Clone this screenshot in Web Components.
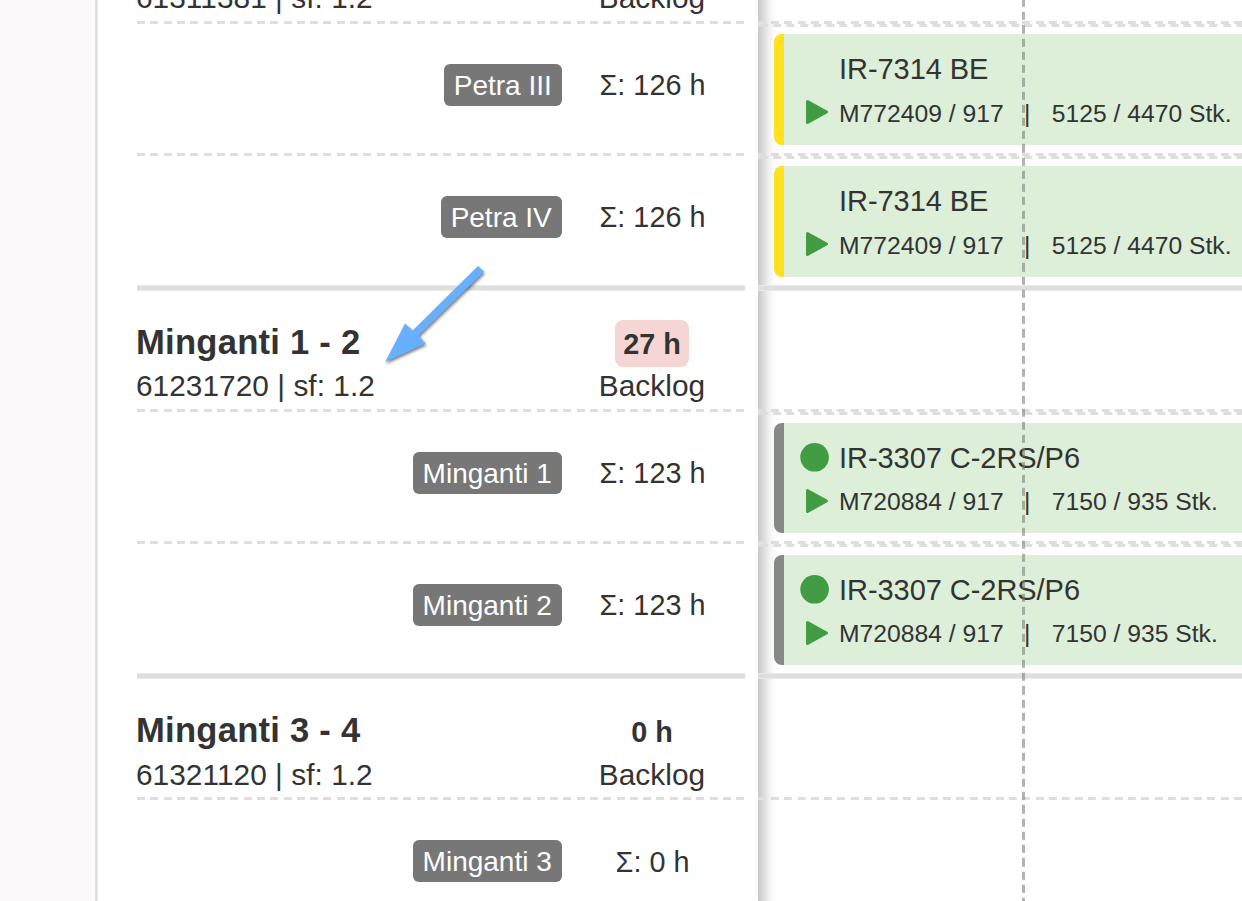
<!DOCTYPE html>
<html lang="de">
<head>
<meta charset="utf-8">
<title>Maschinenplanung</title>
<style>
html,body{margin:0;height:100%;overflow:hidden;background:#fff}
body{font-family:"Liberation Sans",Arial,sans-serif;color:#333}
</style>
</head>
<body>
<plan-board>
  <plan-group slot="labels" name="" code="61311381 | sf: 1.2" hours="" style="height:24px"></plan-group>
  <plan-machine slot="labels" name="Petra III" sum="126 h" style="height:132px"></plan-machine>
  <plan-machine slot="labels" name="Petra IV" sum="126 h" last style="height:135px"></plan-machine>
  <plan-group slot="labels" name="Minganti 1 - 2" code="61231720 | sf: 1.2" hours="27 h" alert style="height:121px"></plan-group>
  <plan-machine slot="labels" name="Minganti 1" sum="123 h" style="height:132px"></plan-machine>
  <plan-machine slot="labels" name="Minganti 2" sum="123 h" last style="height:135px"></plan-machine>
  <plan-group slot="labels" name="Minganti 3 - 4" code="61321120 | sf: 1.2" hours="0 h" style="height:121px;--sub:45px;--name-gap:1px;--hours-gap:0px"></plan-group>
  <plan-machine slot="labels" name="Minganti 3" sum="0 h" style="height:132px;--sum-line:44px"></plan-machine>

  <plan-lane slot="lanes" style="height:24px"></plan-lane>
  <plan-lane slot="lanes" double style="height:132px"><plan-job part="IR-7314 BE" order="M772409 / 917" qty="5125 / 4470 Stk." color="#ffe11f"></plan-job></plan-lane>
  <plan-lane slot="lanes" double last style="height:135px"><plan-job part="IR-7314 BE" order="M772409 / 917" qty="5125 / 4470 Stk." color="#ffe11f"></plan-job></plan-lane>
  <plan-lane slot="lanes" style="height:121px"></plan-lane>
  <plan-lane slot="lanes" double style="height:132px;--gap:8px;--job:110px;--meta:25px"><plan-job part="IR-3307 C-2RS/P6" order="M720884 / 917" qty="7150 / 935 Stk." color="#868986" dot></plan-job></plan-lane>
  <plan-lane slot="lanes" double last style="height:135px;--gap:8px;--job:110px;--meta:25px"><plan-job part="IR-3307 C-2RS/P6" order="M720884 / 917" qty="7150 / 935 Stk." color="#868986" dot></plan-job></plan-lane>
  <plan-lane slot="lanes" style="height:121px"></plan-lane>
  <plan-lane slot="lanes" style="height:132px"></plan-lane>
</plan-board>
<script>
const LINES = `
  .dash{height:3px;flex:none;background:repeating-linear-gradient(90deg,#dedede 0 8px,transparent 8px var(--p,13.32px))}
  .thick{height:6px;flex:none;background:linear-gradient(#e9e9e9 1px,#dedede 1px 5px,#e9e9e9 5px)}
`;
class Base extends HTMLElement {
  connectedCallback(){
    if(!this.shadowRoot) this.attachShadow({mode:'open'}).innerHTML = this.render();
  }
  a(n){return this.getAttribute(n)||''}
}

customElements.define('plan-board', class extends Base {
  render(){return `<style>
    :host{display:grid;grid-template-columns:95px 3px 660px 484px;height:901px;overflow:hidden;position:relative}
    .rail{background:#fbf9fa}
    .edge{background:linear-gradient(90deg,#dedede 2px,#e9e9e9 2px)}
    .labels{display:flex;flex-direction:column;padding:0 13px 0 39px;min-height:0}
    .lanes{display:flex;flex-direction:column;min-height:0;overflow:hidden;background:linear-gradient(90deg,#c9c9c9 0,#dadada 5px,#eeeeee 10px,#fafafa 15px,#fff 20px)}
    .now{position:absolute;left:1022px;top:0;width:3px;height:901px;background:repeating-linear-gradient(180deg,rgba(128,128,128,.6) 0 8.2px,transparent 8.2px 13.22px) 0 -1.2px}
    .arrow{position:absolute;left:370px;top:250px;overflow:visible;filter:drop-shadow(1.5px 2.5px 1.5px rgba(0,0,0,.5))}
  </style>
  <div class="rail"></div><div class="edge"></div>
  <div class="labels"><slot name="labels"></slot></div>
  <div class="lanes"><slot name="lanes"></slot></div>
  <div class="now"></div>
  <svg class="arrow" width="130" height="130"><path d="M108 16L114 21.8L48.5 85.5L55.5 93.5L15.2 112L35 73.5L42.7 80.5Z" fill="#66b0ff"/></svg>`}
});

customElements.define('plan-group', class extends Base {
  render(){return `<style>${LINES}
    :host{display:flex;flex-direction:column;justify-content:flex-end;flex:none;overflow:hidden}
    .row{display:flex;justify-content:space-between;align-items:flex-end;height:92px;flex:none;margin-bottom:-3px;white-space:nowrap}
    .l{display:flex;flex-direction:column}
    .name{font:bold 34.6px/46px "Liberation Sans",Arial,sans-serif;letter-spacing:.25px;height:46px;margin:0 0 calc(1px + var(--name-gap,0px)) -1px}
    .sub{font-size:29.8px;line-height:40px;margin-left:-1px;height:var(--sub,46px);letter-spacing:.05px}
    .r{width:186px;display:flex;flex-direction:column;align-items:center}
    .h{font-weight:bold;font-size:28.8px;line-height:49px;height:47px;padding:0 8px;border-radius:8px;margin-bottom:var(--hours-gap,-1px)}
    .h.on{background:#f6d6d5}
    .r .sub{margin:0}
  </style>
  <div class="row"><div class="l"><div class="name">${this.a('name')}</div><div class="sub">${this.a('code')}</div></div>
  <div class="r"><div class="h ${this.hasAttribute('alert')?'on':''}">${this.a('hours')}</div><div class="sub">Backlog</div></div></div>
  <div class="dash"></div>`}
});

customElements.define('plan-machine', class extends Base {
  render(){const last=this.hasAttribute('last');return `<style>${LINES}
    :host{display:flex;flex-direction:column;justify-content:space-between;flex:none;overflow:hidden}
    .row{display:flex;justify-content:flex-end;align-items:flex-start;height:42px;padding-top:40px}
    .tag{background:#777;color:#fff;border-radius:6px;font-size:28px;line-height:43px;height:42px;padding:0 10.6px 0 10px}
    .sum{font-size:28.8px;line-height:var(--sum-line,42px);width:186px;text-align:center;margin:0 0 0 -3.4px;text-indent:1px}
  </style>
  <div class="row"><div class="tag">${this.a('name')}</div><div class="sum">Σ: ${this.a('sum')}</div></div>
  <div class="${last?'thick':'dash'}"></div>`}
});

customElements.define('plan-lane', class extends Base {
  render(){return `<style>${LINES}
    :host{display:flex;flex-direction:column;flex:none;--p:13.22px}
    .body{flex:1;min-height:0;display:flex;flex-direction:column}
    .dash{background-position:-.2px 0}
    .top{background-position:2.3px 0}
    .pad{padding:var(--gap,7px) 0 0 16px}
  </style>
  ${this.hasAttribute('double')?'<div class="dash top"></div>':''}
  <div class="body"><div class="pad"><slot></slot></div></div>
  <div class="${this.hasAttribute('last')?'thick':'dash'}"></div>`}
});

customElements.define('plan-job', class extends Base {
  render(){return `<style>
    :host{display:block;box-sizing:border-box;height:var(--job,111px);background:#ddefd8;border-left:10px solid ${this.a('color')};border-radius:8px 0 0 8px;white-space:nowrap}
    .g{display:grid;grid-template-columns:55px 1fr;grid-template-rows:66px 30px}
    .part{font-size:29px;line-height:70px;letter-spacing:-.05px}
    .meta{font-size:24.7px;line-height:var(--meta,27px);display:flex}
    .bar{width:48px;text-align:center;box-sizing:border-box;padding-right:1px}
    svg{display:block}
    .dot{margin:20px 0 0 16px}
    .play{margin:-1px 0 0 21px}
  </style>
  <div class="g">
    <div>${this.hasAttribute('dot')?'<svg class="dot" width="30" height="30"><circle cx="14.6" cy="14.3" r="14.3" fill="#419c43"/></svg>':''}</div>
    <div class="part">${this.a('part')}</div>
    <div><svg class="play" width="26" height="28"><path d="M2.5 2.5L21.5 13L2.5 23.5Z" fill="#419c43" stroke="#419c43" stroke-width="3" stroke-linejoin="round"/></svg></div>
    <div class="meta"><span>${this.a('order')}</span><span class="bar">|</span><span>${this.a('qty')}</span></div>
  </div>`}
});
</script>
</body>
</html>
